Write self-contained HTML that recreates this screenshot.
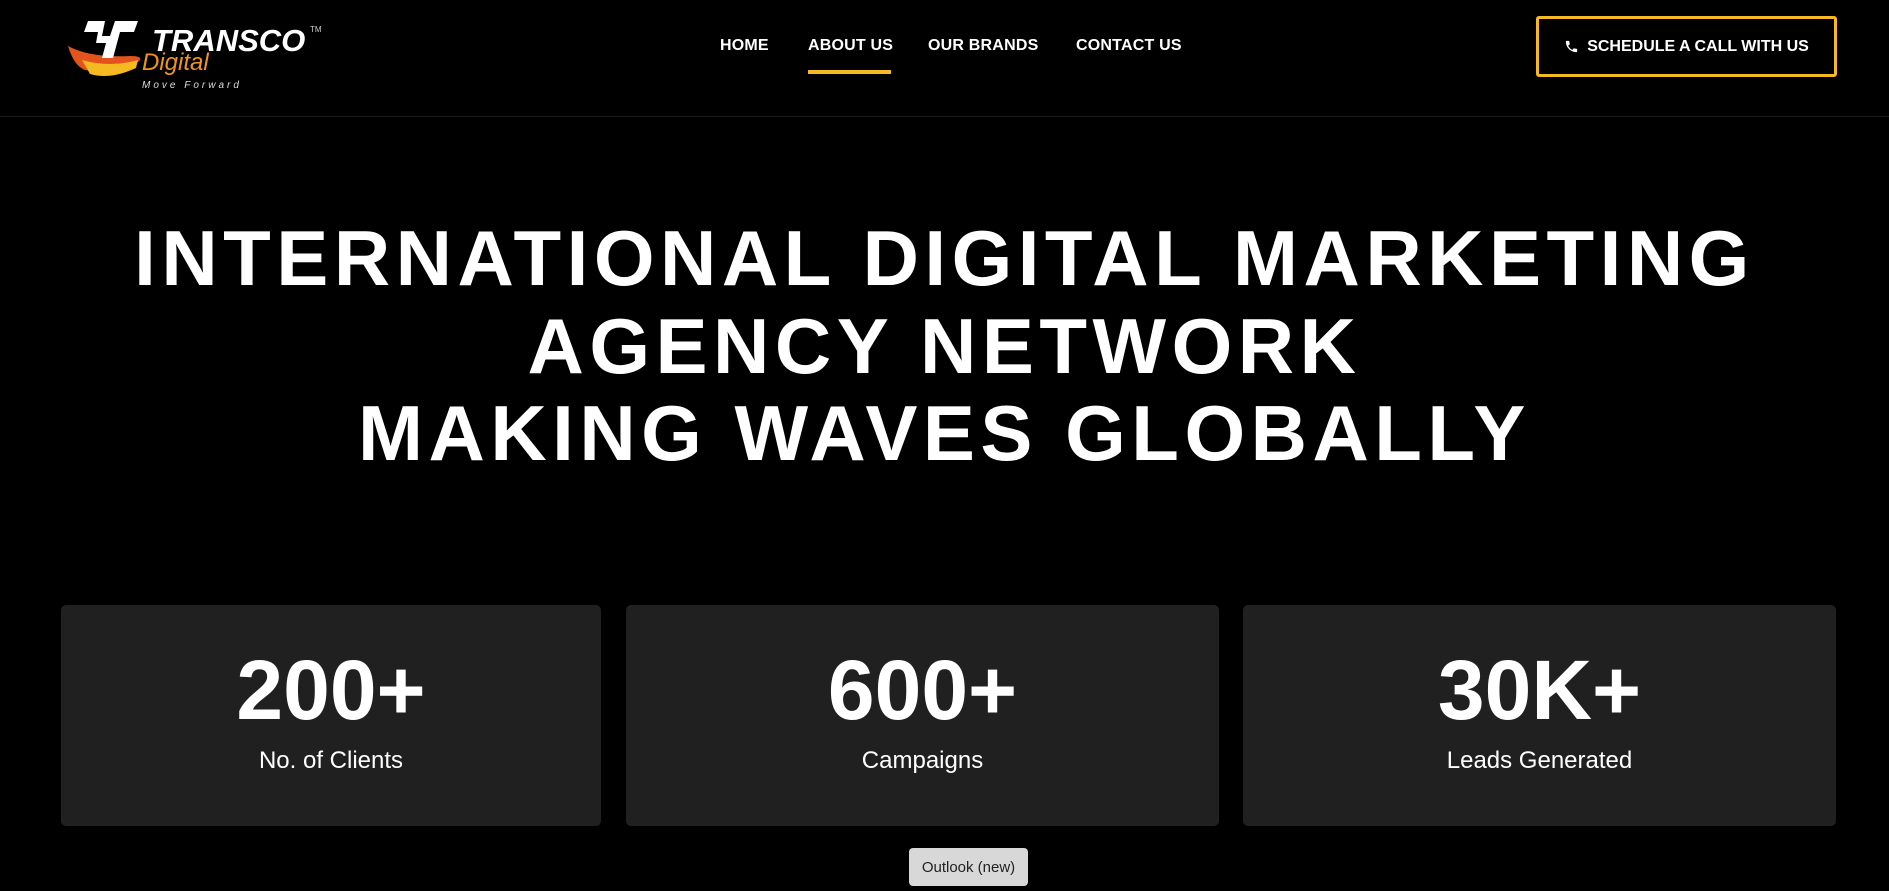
<!DOCTYPE html>
<html><head><meta charset="utf-8"><style>
*{margin:0;padding:0;box-sizing:border-box}
body{width:1889px;height:891px;background:#000;overflow:hidden;font-family:"Liberation Sans",Arial,sans-serif;color:#fff;position:relative}
.hdr{position:absolute;left:0;top:0;width:1889px;height:117px;border-bottom:1px solid #1a1a1a}
.nav a{position:absolute;top:37px;font-size:16px;font-weight:bold;color:#fff;text-decoration:none;letter-spacing:0.2px}
.ul{position:absolute;left:808px;top:70px;width:83px;height:4px;background:#f5b921}
.btn{position:absolute;left:1536px;top:16px;width:301px;height:61px;border:3px solid #f5b921;border-radius:3px;font-size:16px;font-weight:bold;display:flex;align-items:center;justify-content:center;gap:8px}
h1{position:absolute;left:0;top:215px;width:1889px;text-align:center;font-size:78px;line-height:87.5px;font-weight:bold;letter-spacing:5.5px}
.card{position:absolute;top:605px;height:221px;background:#202020;border-radius:5px;text-align:center}
.card .n{font-size:84px;font-weight:bold;line-height:90px;margin-top:40px}
.card .l{font-size:24px;margin-top:12px}
.ol{position:absolute;left:909px;top:848px;width:119px;height:38px;background:#d8d8d8;border-radius:4px;color:#222;font-size:15px;display:flex;align-items:center;justify-content:center}
</style></head><body>
<div class="hdr">
<svg style="position:absolute;left:60px;top:18px" width="280" height="75" viewBox="0 0 280 75">
<path d="M8 28 Q30 40 70 38 Q85 38 78 44 Q55 56 25 52 Q14 48 8 28Z" fill="#e3531e"/>
<path d="M22 42 Q50 50 78 42 L76 50 Q50 62 30 56Z" fill="#f5b921"/>
<path d="M28 3 L45 3 L42 18 L50 18 L55 3 L78 3 L74 14 L60 14 L53 40 L42 40 L46 25 L36 25 L38 14 L24 14Z" fill="#fff"/>
<text x="92" y="33" font-family="Liberation Sans" font-weight="bold" font-style="italic" font-size="31" fill="#fff">TRANSCO</text>
<text x="250" y="14" font-family="Liberation Sans" font-size="8" fill="#ccc">TM</text>
<text x="82" y="52" font-family="Liberation Sans" font-style="italic" font-size="24" fill="#f0931e">Digital</text>
<text x="82" y="70" font-family="Liberation Sans" font-style="italic" font-size="10" fill="#ddd" letter-spacing="3">Move  Forward</text>
</svg>
<div class="nav"><a style="left:720px">HOME</a><a style="left:808px">ABOUT US</a><a style="left:928px">OUR BRANDS</a><a style="left:1076px">CONTACT US</a></div>
<div class="ul"></div>
<div class="btn"><svg width="15" height="15" viewBox="0 0 24 24"><path fill="#fff" d="M6.6 10.8c1.4 2.8 3.8 5.1 6.6 6.6l2.2-2.2c.3-.3.7-.4 1-.2 1.1.4 2.3.6 3.6.6.6 0 1 .4 1 1V20c0 .6-.4 1-1 1C10.6 21 3 13.4 3 4c0-.6.4-1 1-1h3.5c.6 0 1 .4 1 1 0 1.3.2 2.5.6 3.6.1.3 0 .7-.2 1z"/></svg>SCHEDULE A CALL WITH US</div>
</div>
<h1>INTERNATIONAL DIGITAL MARKETING<br>AGENCY NETWORK<br>MAKING WAVES GLOBALLY</h1>
<div class="card" style="left:61px;width:540px"><div class="n">200+</div><div class="l">No. of Clients</div></div>
<div class="card" style="left:626px;width:593px"><div class="n">600+</div><div class="l">Campaigns</div></div>
<div class="card" style="left:1243px;width:593px"><div class="n">30K+</div><div class="l">Leads Generated</div></div>
<div class="ol">Outlook (new)</div>
</body></html>
